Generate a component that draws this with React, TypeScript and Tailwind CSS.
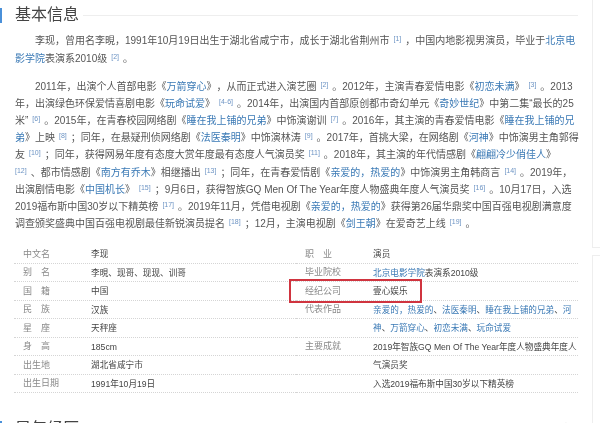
const cjk = "font-['Liberation_Sans','Noto_Sans_CJK_SC',sans-serif]";

function A({ children }: { children: React.ReactNode }) {
  return <span className="text-[#3a79b5]">{children}</span>;
}

function Sup({ children, first }: { children: React.ReactNode; first?: boolean }) {
  return (
    <span className={`${first ? "mr-[4px]" : "mx-[4px]"} align-[3px] text-[7px] leading-none text-[#6d94c4]`}>
      {children}
    </span>
  );
}

function Line({ children, indent }: { children: React.ReactNode; indent?: boolean }) {
  return <div className={`h-[17.2px] whitespace-nowrap ${indent ? "pl-[20px]" : ""}`}>{children}</div>;
}

const left = [
  ["中文名", "李现"],
  ["别　名", "李晛、现哥、现现、训哥"],
  ["国　籍", "中国"],
  ["民　族", "汉族"],
  ["星　座", "天秤座"],
  ["身　高", "185cm"],
  ["出生地", "湖北省咸宁市"],
  ["出生日期", "1991年10月19日"],
];

function Row({ label, children }: { label?: string; children: React.ReactNode }) {
  return (
    <div className="flex h-[18.5px] items-center border-b border-dotted border-[#d5d5d5] pt-[1px] whitespace-nowrap">
      <div className="w-[77px] shrink-0 pl-[9px] text-[9px] text-[#8a8a8a]">{label}</div>
      <div className="text-[8.65px] text-[#444]">{children}</div>
    </div>
  );
}

function Heading({ title, children }: { title: string; children?: React.ReactNode }) {
  return (
    <div className="flex h-[20px] items-center">
      <div className="h-[15px] w-[2px] bg-[#4a90d9]" />
      <div className="ml-[13px] text-[16px] leading-[20px] text-[#444]">{title}</div>
      {children}
    </div>
  );
}

export default function App() {
  return (
    <div className={`relative h-[423px] w-[600px] overflow-hidden bg-white blur-[0.3px] [text-spacing-trim:space-all] ${cjk}`}>
      <div className="flex h-full">
        <div className="w-[592px] shrink-0 pt-[5px]">
          <Heading title="基本信息">
            <div className="ml-[4px] h-px w-[495px] bg-[#eeeeee]" />
          </Heading>

          <div className="mt-[7.4px] pl-[15px] text-[10px] leading-[17.2px] text-[#555]">
            <Line indent>
              李现，曾用名李晛，1991年10月19日出生于湖北省咸宁市，成长于湖北省荆州市<Sup>[1]</Sup>，中国内地影视男演员，毕业于<A>北京电</A>
            </Line>
            <Line>
              <A>影学院</A>表演系2010级<Sup>[2]</Sup>。
            </Line>
            <div className="h-[10.8px]" />
            <Line indent>
              2011年，出演个人首部电影《<A>万箭穿心</A>》，从而正式进入演艺圈<Sup>[2]</Sup>。2012年，主演青春爱情电影《<A>初恋未满</A>》<Sup>[3]</Sup>。2013
            </Line>
            <Line>
              年，出演绿色环保爱情喜剧电影《<A>玩命试爱</A>》<Sup>[4-6]</Sup>。2014年，出演国内首部原创都市奇幻单元《<A>奇妙世纪</A>》中第二集“最长的25
            </Line>
            <Line>
              米”<Sup>[6]</Sup>。2015年，在青春校园网络剧《<A>睡在我上铺的兄弟</A>》中饰演谢训<Sup>[7]</Sup>。2016年，其主演的青春爱情电影《<A>睡在我上铺的兄</A>
            </Line>
            <Line>
              <A>弟</A>》上映<Sup>[8]</Sup>；同年，在悬疑刑侦网络剧《<A>法医秦明</A>》中饰演林涛<Sup>[9]</Sup>。2017年，首挑大梁，在网络剧《<A>河神</A>》中饰演男主角郭得
            </Line>
            <Line>
              友<Sup>[10]</Sup>；同年，获得网易年度有态度大赏年度最有态度人气演员奖<Sup>[11]</Sup>。2018年，其主演的年代情感剧《<A>翩翩冷少俏佳人</A>》
            </Line>
            <Line>
              <Sup first>[12]</Sup>、都市情感剧《<A>南方有乔木</A>》相继播出<Sup>[13]</Sup>；同年，在青春爱情剧《<A>亲爱的，热爱的</A>》中饰演男主角韩商言<Sup>[14]</Sup>。2019年，
            </Line>
            <Line>
              出演剧情电影《<A>中国机长</A>》<Sup>[15]</Sup>；9月6日，获得智族GQ Men Of The Year年度人物盛典年度人气演员奖<Sup>[16]</Sup>。10月17日，入选
            </Line>
            <Line>
              2019福布斯中国30岁以下精英榜<Sup>[17]</Sup>。2019年11月，凭借电视剧《<A>亲爱的，热爱的</A>》获得第26届华鼎奖中国百强电视剧满意度
            </Line>
            <Line>
              调查颁奖盛典中国百强电视剧最佳新锐演员提名<Sup>[18]</Sup>；12月，主演电视剧《<A>剑王朝</A>》在爱奇艺上线<Sup>[19]</Sup>。
            </Line>
          </div>

          <div className="mt-[13px] ml-[14px] flex w-[564px]">
            <div className="w-[282px]">
              {left.map(([label, value]) => (
                <Row key={label} label={label}>{value}</Row>
              ))}
            </div>
            <div className="w-[282px]">
              <Row label="职　业">演员</Row>
              <Row label="毕业院校"><A>北京电影学院</A>表演系2010级</Row>
              <Row label="经纪公司">壹心娱乐</Row>
              <Row label="代表作品"><A>亲爱的，热爱的</A>、<A>法医秦明</A>、<A>睡在我上铺的兄弟</A>、<A>河</A></Row>
              <Row><A>神</A>、<A>万箭穿心</A>、<A>初恋未满</A>、<A>玩命试爱</A></Row>
              <Row label="主要成就">2019年智族GQ Men Of The Year年度人物盛典年度人</Row>
              <Row>气演员奖</Row>
              <Row>入选2019福布斯中国30岁以下精英榜</Row>
            </div>
          </div>

          <div className="mt-[25.5px]">
            <Heading title="早年经历">
              <div className="mr-[14px] ml-auto text-[9px] text-[#888]">编辑</div>
            </Heading>
          </div>
        </div>
        <div className="flex flex-1 flex-col gap-[7px]">
          <div className="h-[248px] border-b border-l border-[#eeeeee]" />
          <div className="flex-1 border-t border-l border-[#eeeeee]" />
        </div>
      </div>
      <div className="absolute top-[279px] left-[289px] h-[24px] w-[133px] border-2 border-[#d0343f]" />
    </div>
  );
}
